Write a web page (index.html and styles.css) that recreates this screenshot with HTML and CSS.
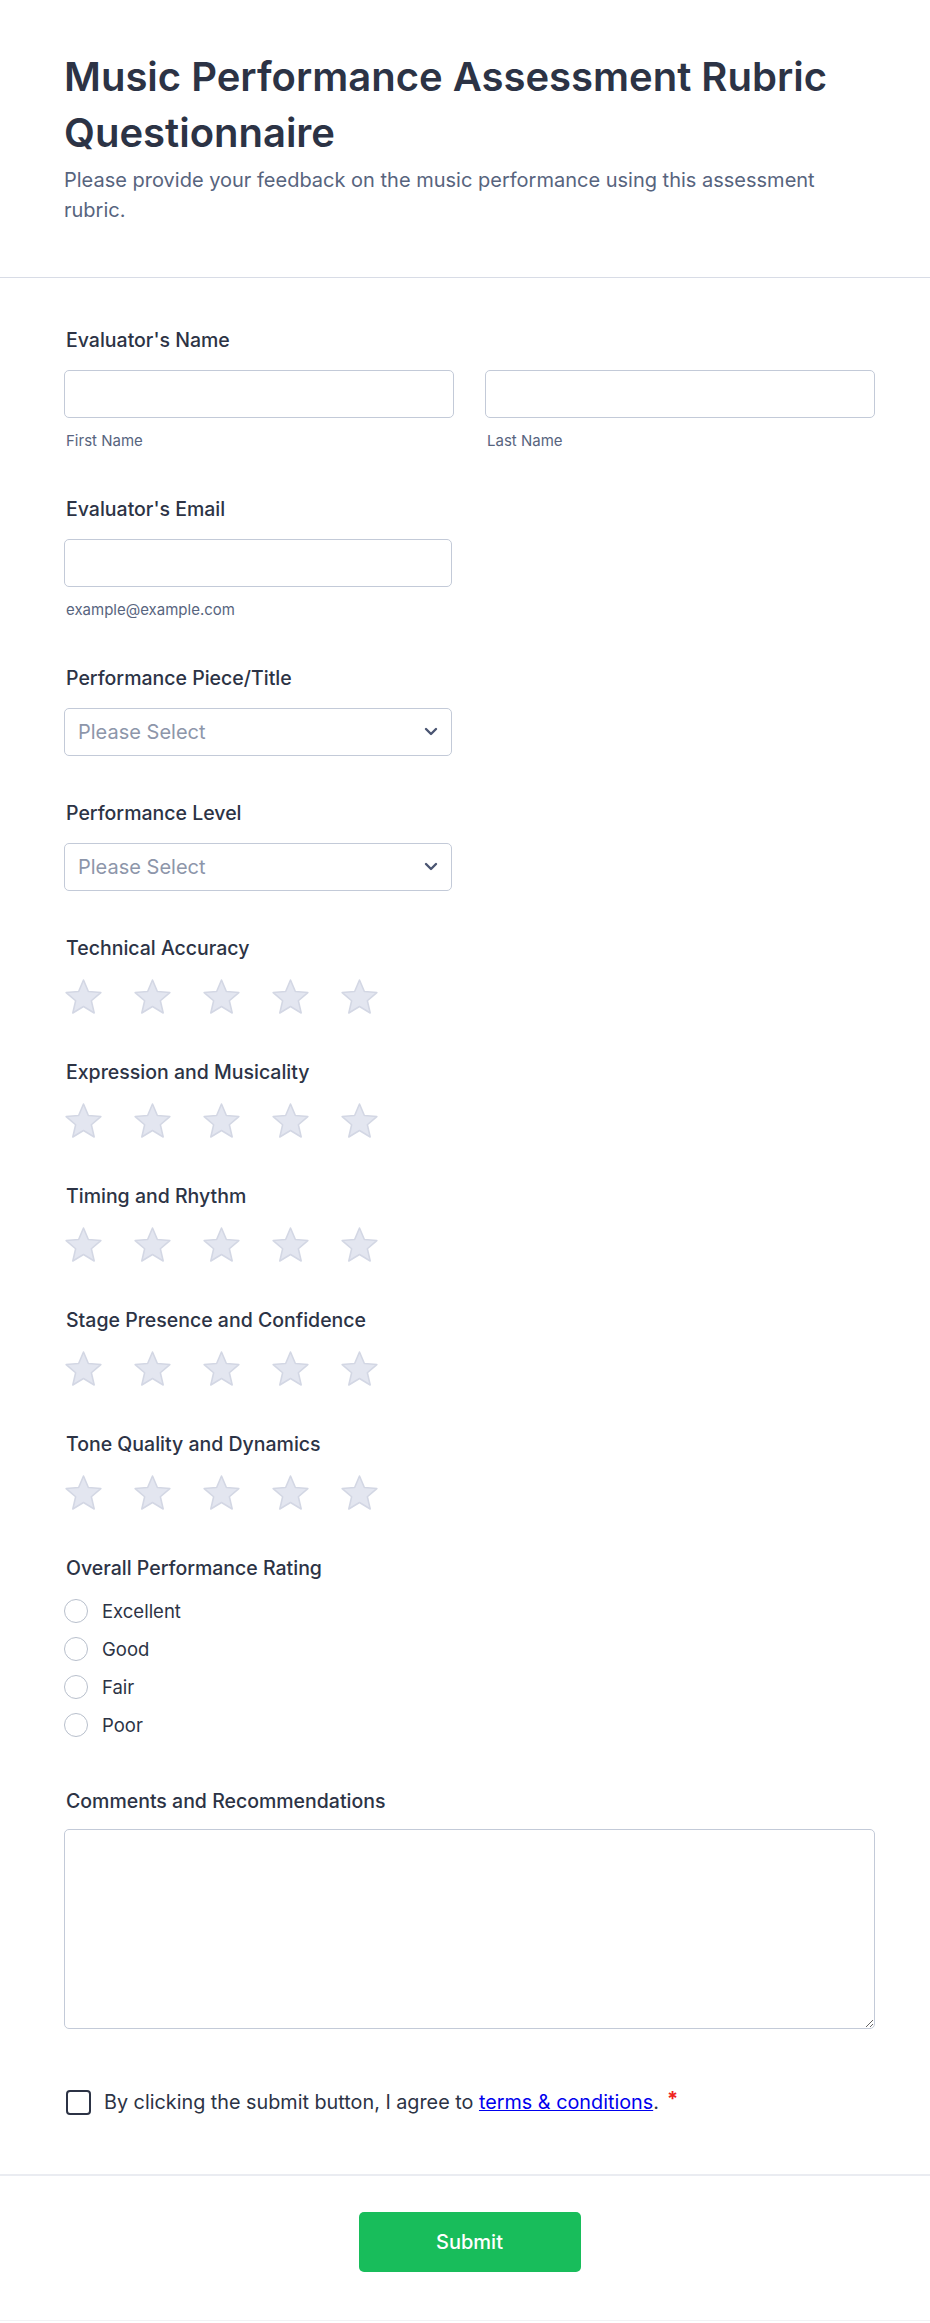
FILE: index.html
```html
<!DOCTYPE html>
<html lang="en">
<head>
<meta charset="utf-8">
<title>Music Performance Assessment Rubric Questionnaire</title>
<link rel="stylesheet" href="styles.css">
</head>
<body>
<header class="form-header">
  <div class="header-inner">
    <h1 class="form-title">Music Performance Assessment Rubric Questionnaire</h1>
    <p class="form-subtitle">Please provide your feedback on the music performance using this assessment rubric.</p>
  </div>
</header>

<form class="form-body">
  <div class="field">
    <div class="label">Evaluator's Name</div>
    <div class="name-grid">
      <div class="sub-field">
        <input class="text-input" type="text">
        <div class="sublabel">First Name</div>
      </div>
      <div class="sub-field">
        <input class="text-input" type="text">
        <div class="sublabel">Last Name</div>
      </div>
    </div>
  </div>

  <div class="field">
    <div class="label">Evaluator's Email</div>
    <div class="sub-field half">
      <input class="text-input" type="email">
      <div class="sublabel">example@example.com</div>
    </div>
  </div>

  <div class="field">
    <div class="label">Performance Piece/Title</div>
    <div class="select half">
      <span class="placeholder">Please Select</span>
      <svg class="chevron" width="14" height="9" viewBox="0 0 14 9"><path d="M2 2l5 5 5-5" fill="none" stroke="#4a5572" stroke-width="2.4" stroke-linecap="round" stroke-linejoin="round"/></svg>
    </div>
  </div>

  <div class="field">
    <div class="label">Performance Level</div>
    <div class="select half">
      <span class="placeholder">Please Select</span>
      <svg class="chevron" width="14" height="9" viewBox="0 0 14 9"><path d="M2 2l5 5 5-5" fill="none" stroke="#4a5572" stroke-width="2.4" stroke-linecap="round" stroke-linejoin="round"/></svg>
    </div>
  </div>

  <div class="field">
    <div class="label">Technical Accuracy</div>
    <div class="stars">
      <svg class="star" viewBox="1.4 1.4 21.2 20.2"><path d="M12 17.27L18.18 21l-1.64-7.03L22 9.24l-7.19-.61L12 2 9.19 8.63 2 9.24l5.46 4.73L5.82 21z"/></svg>
      <svg class="star" viewBox="1.4 1.4 21.2 20.2"><path d="M12 17.27L18.18 21l-1.64-7.03L22 9.24l-7.19-.61L12 2 9.19 8.63 2 9.24l5.46 4.73L5.82 21z"/></svg>
      <svg class="star" viewBox="1.4 1.4 21.2 20.2"><path d="M12 17.27L18.18 21l-1.64-7.03L22 9.24l-7.19-.61L12 2 9.19 8.63 2 9.24l5.46 4.73L5.82 21z"/></svg>
      <svg class="star" viewBox="1.4 1.4 21.2 20.2"><path d="M12 17.27L18.18 21l-1.64-7.03L22 9.24l-7.19-.61L12 2 9.19 8.63 2 9.24l5.46 4.73L5.82 21z"/></svg>
      <svg class="star" viewBox="1.4 1.4 21.2 20.2"><path d="M12 17.27L18.18 21l-1.64-7.03L22 9.24l-7.19-.61L12 2 9.19 8.63 2 9.24l5.46 4.73L5.82 21z"/></svg>
    </div>
  </div>

  <div class="field">
    <div class="label">Expression and Musicality</div>
    <div class="stars">
      <svg class="star" viewBox="1.4 1.4 21.2 20.2"><path d="M12 17.27L18.18 21l-1.64-7.03L22 9.24l-7.19-.61L12 2 9.19 8.63 2 9.24l5.46 4.73L5.82 21z"/></svg>
      <svg class="star" viewBox="1.4 1.4 21.2 20.2"><path d="M12 17.27L18.18 21l-1.64-7.03L22 9.24l-7.19-.61L12 2 9.19 8.63 2 9.24l5.46 4.73L5.82 21z"/></svg>
      <svg class="star" viewBox="1.4 1.4 21.2 20.2"><path d="M12 17.27L18.18 21l-1.64-7.03L22 9.24l-7.19-.61L12 2 9.19 8.63 2 9.24l5.46 4.73L5.82 21z"/></svg>
      <svg class="star" viewBox="1.4 1.4 21.2 20.2"><path d="M12 17.27L18.18 21l-1.64-7.03L22 9.24l-7.19-.61L12 2 9.19 8.63 2 9.24l5.46 4.73L5.82 21z"/></svg>
      <svg class="star" viewBox="1.4 1.4 21.2 20.2"><path d="M12 17.27L18.18 21l-1.64-7.03L22 9.24l-7.19-.61L12 2 9.19 8.63 2 9.24l5.46 4.73L5.82 21z"/></svg>
    </div>
  </div>

  <div class="field">
    <div class="label">Timing and Rhythm</div>
    <div class="stars">
      <svg class="star" viewBox="1.4 1.4 21.2 20.2"><path d="M12 17.27L18.18 21l-1.64-7.03L22 9.24l-7.19-.61L12 2 9.19 8.63 2 9.24l5.46 4.73L5.82 21z"/></svg>
      <svg class="star" viewBox="1.4 1.4 21.2 20.2"><path d="M12 17.27L18.18 21l-1.64-7.03L22 9.24l-7.19-.61L12 2 9.19 8.63 2 9.24l5.46 4.73L5.82 21z"/></svg>
      <svg class="star" viewBox="1.4 1.4 21.2 20.2"><path d="M12 17.27L18.18 21l-1.64-7.03L22 9.24l-7.19-.61L12 2 9.19 8.63 2 9.24l5.46 4.73L5.82 21z"/></svg>
      <svg class="star" viewBox="1.4 1.4 21.2 20.2"><path d="M12 17.27L18.18 21l-1.64-7.03L22 9.24l-7.19-.61L12 2 9.19 8.63 2 9.24l5.46 4.73L5.82 21z"/></svg>
      <svg class="star" viewBox="1.4 1.4 21.2 20.2"><path d="M12 17.27L18.18 21l-1.64-7.03L22 9.24l-7.19-.61L12 2 9.19 8.63 2 9.24l5.46 4.73L5.82 21z"/></svg>
    </div>
  </div>

  <div class="field">
    <div class="label">Stage Presence and Confidence</div>
    <div class="stars">
      <svg class="star" viewBox="1.4 1.4 21.2 20.2"><path d="M12 17.27L18.18 21l-1.64-7.03L22 9.24l-7.19-.61L12 2 9.19 8.63 2 9.24l5.46 4.73L5.82 21z"/></svg>
      <svg class="star" viewBox="1.4 1.4 21.2 20.2"><path d="M12 17.27L18.18 21l-1.64-7.03L22 9.24l-7.19-.61L12 2 9.19 8.63 2 9.24l5.46 4.73L5.82 21z"/></svg>
      <svg class="star" viewBox="1.4 1.4 21.2 20.2"><path d="M12 17.27L18.18 21l-1.64-7.03L22 9.24l-7.19-.61L12 2 9.19 8.63 2 9.24l5.46 4.73L5.82 21z"/></svg>
      <svg class="star" viewBox="1.4 1.4 21.2 20.2"><path d="M12 17.27L18.18 21l-1.64-7.03L22 9.24l-7.19-.61L12 2 9.19 8.63 2 9.24l5.46 4.73L5.82 21z"/></svg>
      <svg class="star" viewBox="1.4 1.4 21.2 20.2"><path d="M12 17.27L18.18 21l-1.64-7.03L22 9.24l-7.19-.61L12 2 9.19 8.63 2 9.24l5.46 4.73L5.82 21z"/></svg>
    </div>
  </div>

  <div class="field">
    <div class="label">Tone Quality and Dynamics</div>
    <div class="stars">
      <svg class="star" viewBox="1.4 1.4 21.2 20.2"><path d="M12 17.27L18.18 21l-1.64-7.03L22 9.24l-7.19-.61L12 2 9.19 8.63 2 9.24l5.46 4.73L5.82 21z"/></svg>
      <svg class="star" viewBox="1.4 1.4 21.2 20.2"><path d="M12 17.27L18.18 21l-1.64-7.03L22 9.24l-7.19-.61L12 2 9.19 8.63 2 9.24l5.46 4.73L5.82 21z"/></svg>
      <svg class="star" viewBox="1.4 1.4 21.2 20.2"><path d="M12 17.27L18.18 21l-1.64-7.03L22 9.24l-7.19-.61L12 2 9.19 8.63 2 9.24l5.46 4.73L5.82 21z"/></svg>
      <svg class="star" viewBox="1.4 1.4 21.2 20.2"><path d="M12 17.27L18.18 21l-1.64-7.03L22 9.24l-7.19-.61L12 2 9.19 8.63 2 9.24l5.46 4.73L5.82 21z"/></svg>
      <svg class="star" viewBox="1.4 1.4 21.2 20.2"><path d="M12 17.27L18.18 21l-1.64-7.03L22 9.24l-7.19-.61L12 2 9.19 8.63 2 9.24l5.46 4.73L5.82 21z"/></svg>
    </div>
  </div>

  <div class="field">
    <div class="label">Overall Performance Rating</div>
    <div class="radio-list">
      <div class="radio-row"><span class="radio"></span><span class="radio-label">Excellent</span></div>
      <div class="radio-row"><span class="radio"></span><span class="radio-label">Good</span></div>
      <div class="radio-row"><span class="radio"></span><span class="radio-label">Fair</span></div>
      <div class="radio-row"><span class="radio"></span><span class="radio-label">Poor</span></div>
    </div>
  </div>

  <div class="field">
    <div class="label">Comments and Recommendations</div>
    <textarea class="textarea"></textarea>
  </div>

  <div class="terms">
    <span class="checkbox"></span>
    <span class="terms-text">By clicking the submit button, I agree to <a href="#" class="terms-link">terms &amp; conditions</a>.<span class="required">*</span></span>
  </div>
</form>

<footer class="form-footer">
  <button class="submit" type="button">Submit</button>
</footer>
</body>
</html>
```

FILE: styles.css
```css
* { box-sizing: border-box; }

body {
  margin: 0;
  background: #ffffff;
  font-family: Inter, "Noto Sans", "Liberation Sans", sans-serif;
  color: #2c3345;
}

.form-header {
  padding: 49px 64px 52px 64px;
  border-bottom: 1px solid #d8dce6;
}

.header-inner {
  max-width: 790px;
}

.form-title {
  margin: 0;
  font-size: 40px;
  line-height: 56px;
  font-weight: 600;
  color: #2c3345;
}

.form-subtitle {
  margin: 4px 0 0 0;
  font-size: 20px;
  line-height: 30px;
  font-weight: 400;
  color: #57647e;
}

.form-body {
  padding: 47px 55px 57px 64px;
  display: flex;
  flex-direction: column;
  gap: 42px;
}

.field {
  display: flex;
  flex-direction: column;
}

.label {
  font-size: 19.5px;
  line-height: 30px;
  font-weight: 500;
  color: #2c3345;
  margin-bottom: 15px;
  padding-left: 2px;
}

.name-grid {
  display: grid;
  grid-template-columns: 1fr 1fr;
  column-gap: 31px;
}

.sub-field {
  display: flex;
  flex-direction: column;
}

.half {
  width: 388px;
}

.text-input {
  height: 48px;
  width: 100%;
  border: 1px solid #c3cad8;
  border-radius: 5px;
  background: #fff;
  font-family: inherit;
  font-size: 20px;
  padding: 0 14px;
  margin: 0;
}

.sublabel {
  margin-top: 12px;
  font-size: 15px;
  line-height: 22px;
  color: #57647e;
  padding-left: 2px;
}

.select {
  height: 48px;
  border: 1px solid #c3cad8;
  border-radius: 5px;
  background: #fff;
  display: flex;
  align-items: center;
  justify-content: space-between;
  padding: 0 13px 0 13px;
}

.placeholder {
  font-size: 20px;
  color: #8d96aa;
}

.chevron {
  display: block;
  margin-top: -2px;
}

.stars {
  display: flex;
  gap: 32px;
  height: 37px;
  align-items: center;
  padding-left: 1px;
}

.star {
  width: 37px;
  height: 35px;
  display: block;
}

.star path {
  fill: #e3e6f0;
  stroke: #d3d7e4;
  stroke-width: 0.9;
  stroke-linejoin: round;
}

.label + .radio-list {
  margin-top: -6px;
}

.radio-list {
  display: flex;
  flex-direction: column;
}

.radio-row {
  height: 38px;
  display: flex;
  align-items: center;
  gap: 14px;
}

.radio {
  width: 24px;
  height: 24px;
  border-radius: 50%;
  border: 1.5px solid #b8bfcc;
  background: #fff;
  flex: none;
}

.radio-label {
  font-size: 18.5px;
  color: #2c3345;
}

.textarea {
  display: block;
  width: 100%;
  height: 200px;
  margin-top: -2px;
  border: 1px solid #c3cad8;
  border-radius: 5px;
  background: #fff;
  resize: vertical;
  font-family: inherit;
  font-size: 18px;
}

.terms {
  margin-top: 16px;
  display: flex;
  align-items: center;
  height: 30px;
  padding-left: 2px;
  gap: 13px;
}

.checkbox {
  width: 25px;
  height: 25px;
  border: 2px solid #2c3345;
  border-radius: 4px;
  background: #fff;
  flex: none;
}

.terms-text {
  font-size: 19.8px;
  line-height: 30px;
  color: #2c3345;
}

.terms-link {
  color: #0000ee;
  text-decoration: underline;
}

.required {
  color: #f0241f;
  margin-left: 8px;
  font-size: 20px;
  font-weight: 700;
  vertical-align: 3px;
  line-height: 0;
}

.form-footer {
  border-top: 2px solid #eaecf1;
  border-bottom: 1px solid #f1f2f5;
  padding: 36px 55px 48px 64px;
  display: flex;
  justify-content: center;
}

.submit {
  width: 222px;
  height: 60px;
  border: none;
  border-radius: 5px;
  background: #18bd5b;
  color: #ffffff;
  font-family: inherit;
  font-size: 20px;
  font-weight: 500;
  cursor: pointer;
}
```
